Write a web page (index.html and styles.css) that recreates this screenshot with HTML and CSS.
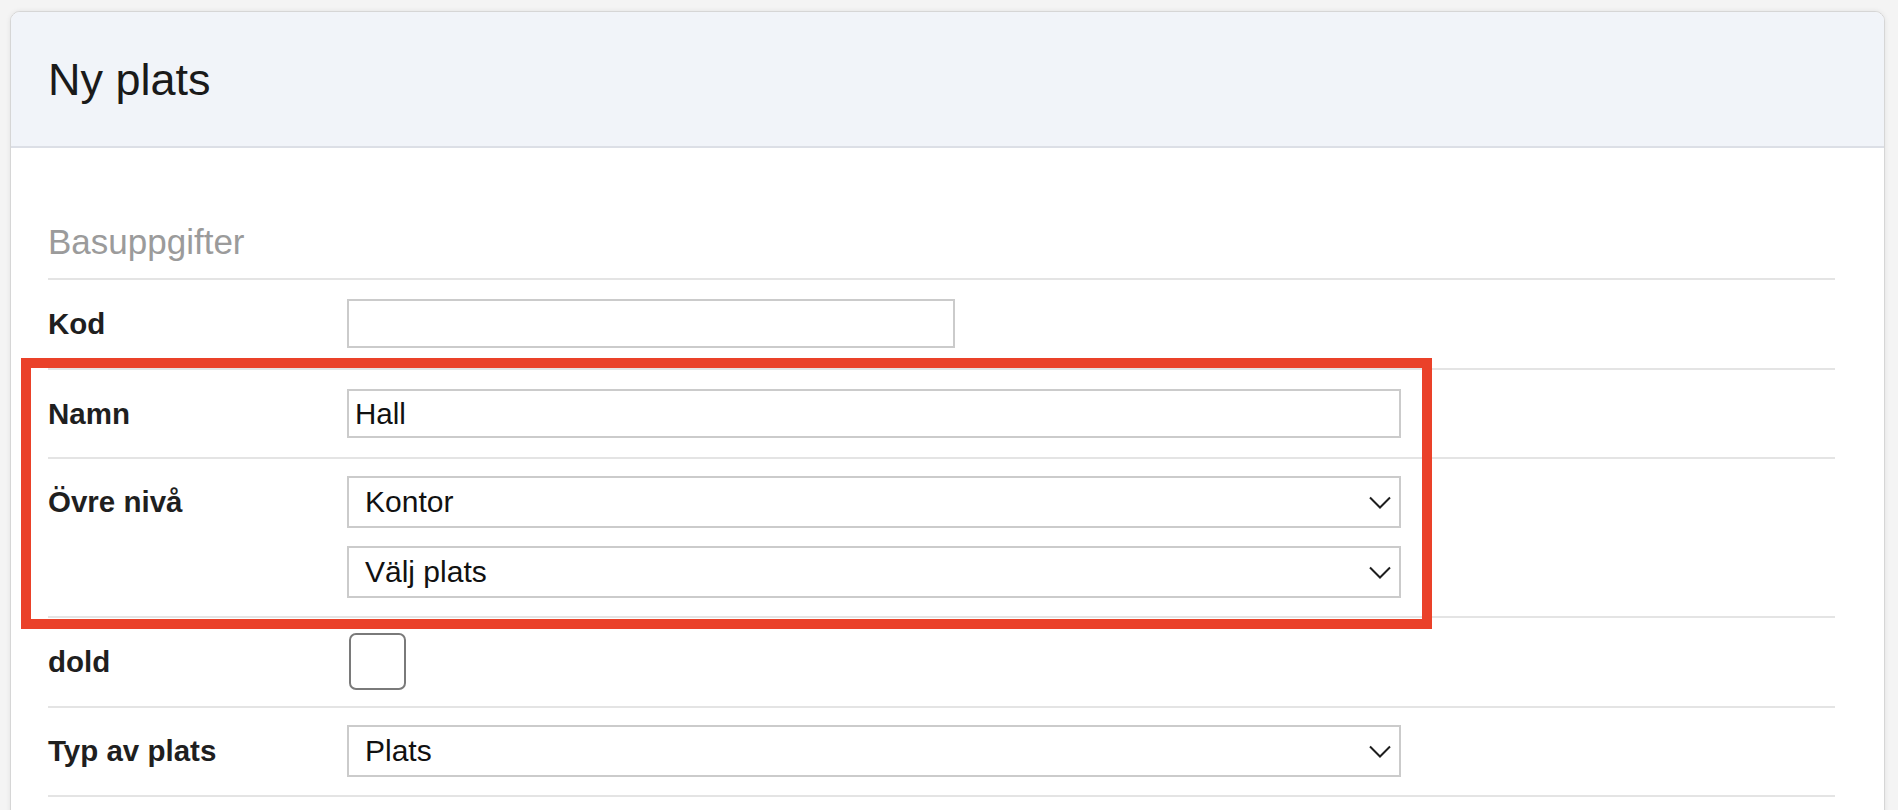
FILE: index.html
```html
<!DOCTYPE html>
<html lang="sv">
<head>
<meta charset="utf-8">
<title>Ny plats</title>
<link rel="stylesheet" href="styles.css">
</head>
<body>
<div class="page">
  <section class="card">
    <header class="card-header">
      <h1 class="card-title">Ny plats</h1>
    </header>
    <div class="card-body">
      <h2 class="section-title">Basuppgifter</h2>
      <div class="form">
        <div class="row row-text row-first">
          <label class="label label-text">Kod</label>
          <div class="controls">
            <input class="input input-short" type="text" value="">
          </div>
        </div>
        <div class="row row-text row-second">
          <label class="label label-text">Namn</label>
          <div class="controls">
            <input class="input" type="text" value="Hall">
          </div>
        </div>
        <div class="row row-select">
          <label class="label label-select">Övre nivå</label>
          <div class="controls controls-stack">
            <div class="select"><span>Kontor</span><svg class="chev" width="22" height="13" viewBox="0 0 22 13"><path d="M1 1.5 L11 11.5 L21 1.5" fill="none" stroke="#1e1e1e" stroke-width="2"/></svg></div>
            <div class="select"><span>Välj plats</span><svg class="chev" width="22" height="13" viewBox="0 0 22 13"><path d="M1 1.5 L11 11.5 L21 1.5" fill="none" stroke="#1e1e1e" stroke-width="2"/></svg></div>
          </div>
        </div>
        <div class="row row-check">
          <label class="label label-check">dold</label>
          <div class="controls">
            <input class="checkbox" type="checkbox">
          </div>
        </div>
        <div class="row row-select row-last">
          <label class="label label-select">Typ av plats</label>
          <div class="controls">
            <div class="select"><span>Plats</span><svg class="chev" width="22" height="13" viewBox="0 0 22 13"><path d="M1 1.5 L11 11.5 L21 1.5" fill="none" stroke="#1e1e1e" stroke-width="2"/></svg></div>
          </div>
        </div>
      </div>
    </div>
  </section>
  <div class="highlight"></div>
</div>
</body>
</html>
```

FILE: styles.css
```css
html, body {
  margin: 0;
  padding: 0;
  overflow: hidden;
  background: #f4f4f4;
}

body {
  font-family: "Liberation Sans", Arial, Helvetica, sans-serif;
  color: #222;
}

.page {
  position: relative;
  padding: 11px 13px 0 10px;
}

.card {
  background: #fff;
  border: 1px solid #d6d6d6;
  border-radius: 10px;
  box-shadow: 0 0 5px rgba(0, 0, 0, 0.08);
  overflow: hidden;
  padding-bottom: 80px;
}

.card-header {
  box-sizing: border-box;
  height: 136px;
  padding: 42px 37px 0;
  background: #f1f4f9;
  border-bottom: 2px solid #dcdfe6;
}

.card-title {
  margin: 0;
  font-size: 45px;
  line-height: 52px;
  font-weight: normal;
  color: #1a1a1a;
}

.card-body {
  padding: 74px 49px 0 37px;
}

.section-title {
  margin: 0;
  font-size: 35px;
  line-height: 40px;
  font-weight: normal;
  color: #9b9b9b;
  border-bottom: 2px solid #e4e4e4;
  padding-bottom: 16px;
}

.row {
  display: flex;
  border-bottom: 2px solid #e4e4e4;
}

.row-text { padding: 19px 0 19px; }
.row-first { padding-bottom: 20px; }
.row-select { padding: 17px 0 18px; }
.row-check { padding: 15px 0 16px; }

.label {
  width: 299px;
  flex: none;
  display: flex;
  align-items: center;
  font-size: 29.5px;
  font-weight: bold;
  color: #1f1f1f;
}

.label-text { height: 49px; }
.label-select { height: 52px; }
.label-check { height: 57px; }

.controls {
  flex: none;
  width: 1054px;
}

.controls-stack {
  display: flex;
  flex-direction: column;
  gap: 18px;
}

.input {
  box-sizing: border-box;
  display: block;
  width: 1054px;
  height: 49px;
  margin: 0;
  padding: 0 6px;
  border: 2px solid #cbcbcb;
  border-radius: 0;
  font-family: "Liberation Sans", Arial, Helvetica, sans-serif;
  font-size: 29.5px;
  color: #111;
  background: #fff;
  outline: none;
}

.input-short {
  width: 608px;
}

.select {
  box-sizing: border-box;
  height: 52px;
  display: flex;
  align-items: center;
  justify-content: space-between;
  padding: 0 8px 0 16px;
  border: 2px solid #cbcbcb;
  background: #fff;
  font-size: 30px;
  color: #111;
}

.chev {
  display: block;
  flex: none;
}

.checkbox {
  -webkit-appearance: none;
  appearance: none;
  box-sizing: border-box;
  display: block;
  width: 57px;
  height: 57px;
  margin: 0 0 0 2px;
  border: 2px solid #7a7a7a;
  border-radius: 7px;
  background: #fff;
}

.highlight {
  position: absolute;
  left: 21px;
  top: 358px;
  box-sizing: border-box;
  width: 1411px;
  height: 271px;
  border: 10px solid #ea4129;
  pointer-events: none;
}
```
